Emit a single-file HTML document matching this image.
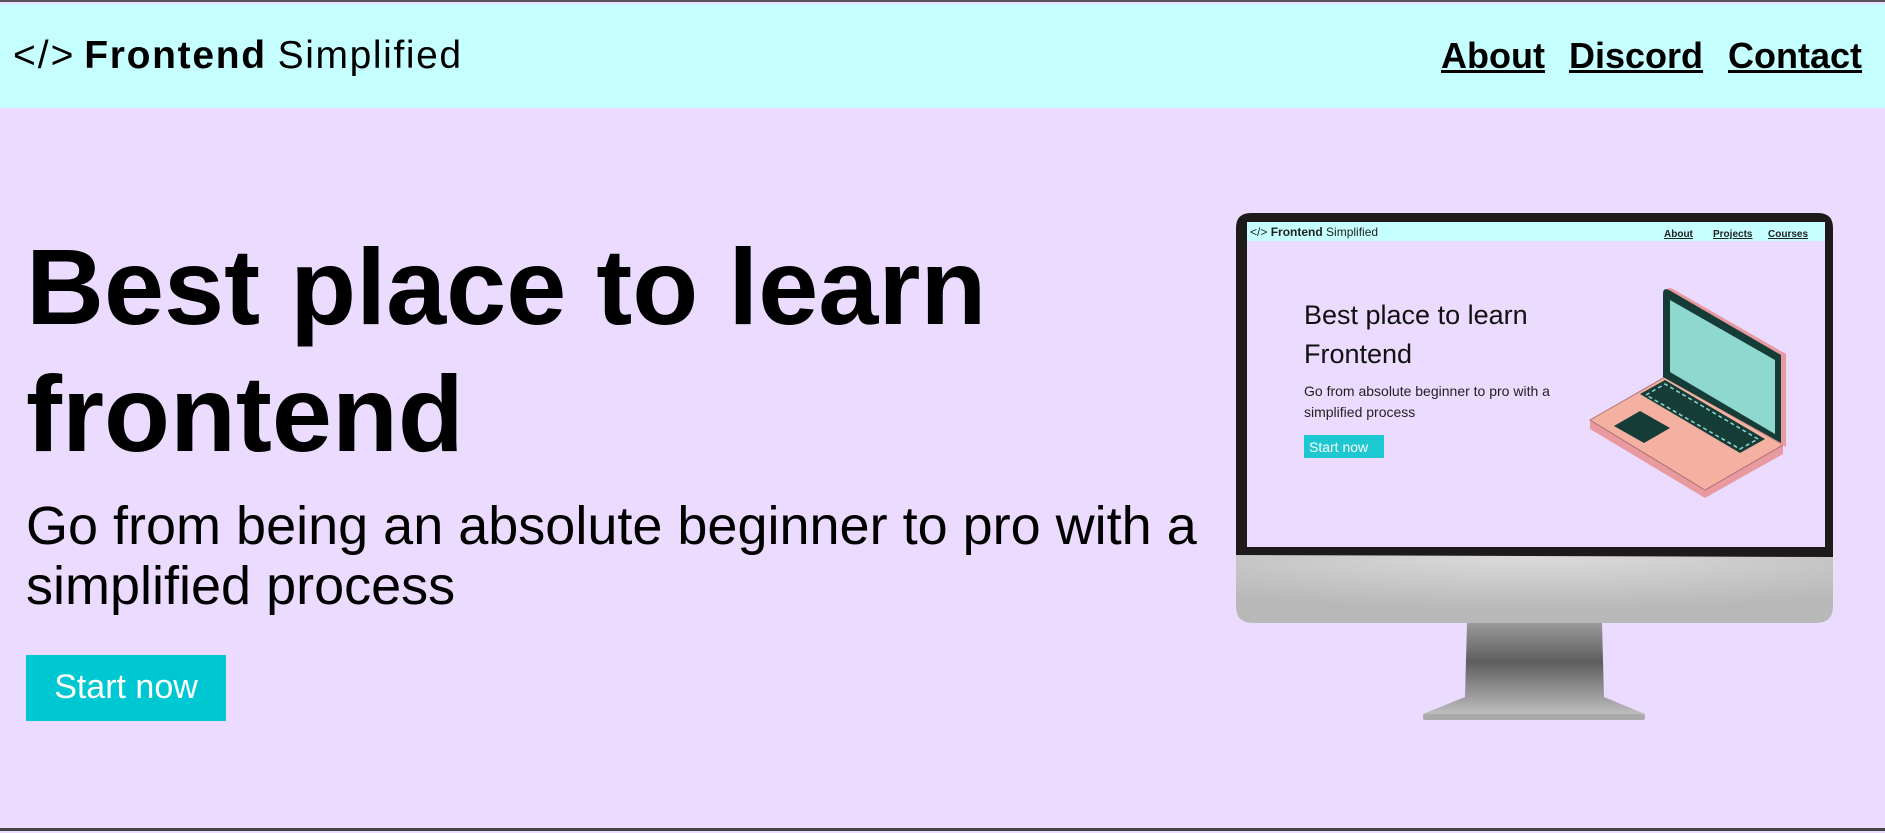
<!DOCTYPE html>
<html><head><meta charset="utf-8"><style>
*{margin:0;padding:0;box-sizing:border-box}
body{width:1885px;height:831px;background:#ebdbff;font-family:"Liberation Sans",sans-serif;position:relative;overflow:hidden;border-top:2px solid #555;border-bottom:3px solid #444}
.hdr{position:absolute;left:0;top:2px;width:1885px;height:104px;background:#c6ffff}
.logo{position:absolute;left:13px;top:32px;font-size:39px;line-height:44px;color:#000;white-space:nowrap}
.logo b{font-weight:bold;letter-spacing:1.7px}
.logo span.s{font-weight:normal;letter-spacing:1.6px}
.logo i{font-style:normal;letter-spacing:2px;margin-right:-2px}
.nav{position:absolute;top:33px;font-size:36px;font-weight:bold;text-decoration:underline;color:#000}
h1{position:absolute;left:26px;top:221px;font-size:108px;line-height:127px;font-weight:bold;color:#000}
p.sub{position:absolute;left:26px;top:494px;font-size:54px;line-height:60px;color:#000;width:1210px}
.btn{position:absolute;left:26px;top:653px;width:200px;height:66px;background:#00c8d2;color:#fff;font-size:34px;line-height:64px;text-align:center}
</style></head><body>
<div class="hdr"></div>
<div class="logo"><i>&lt;/&gt;</i> <b>Frontend</b> <span class="s">Simplified</span></div>
<div class="nav" style="left:1441px">About</div>
<div class="nav" style="left:1569px">Discord</div>
<div class="nav" style="left:1728px">Contact</div>
<h1>Best place to learn<br>frontend</h1>
<p class="sub">Go from being an absolute beginner to pro with a simplified process</p>
<div class="btn">Start now</div>

<svg style="position:absolute;left:0;top:0" width="1885" height="831" viewBox="0 0 1885 831">
<defs>
<radialGradient id="chin" cx="0.5" cy="0" r="0.8"><stop offset="0" stop-color="#dcdcdc"/><stop offset="1" stop-color="#b8b8b8"/></radialGradient>
<linearGradient id="neck" x1="0" y1="0" x2="0" y2="1"><stop offset="0" stop-color="#9a9a9a"/><stop offset="0.4" stop-color="#5e5e5e"/><stop offset="1" stop-color="#c8c8c8"/></linearGradient>
</defs>
<path d="M1467 621 L1602 621 L1604 695 L1645 712 L1645 718 L1423 718 L1423 712 L1465 695 Z" fill="url(#neck)"/>
<rect x="1423" y="712" width="222" height="6" rx="3" fill="#aaa"/>
<path d="M1236 553 L1833 553 L1833 604 Q1833 621 1816 621 L1253 621 Q1236 621 1236 604 Z" fill="url(#chin)"/>
<path d="M1236 553 L1236 226 Q1236 211 1251 211 L1818 211 Q1833 211 1833 226 L1833 555 Z" fill="#1e1a1a"/>
<rect x="1247" y="220" width="578" height="325" fill="#ebdbff"/>
<rect x="1247" y="220" width="578" height="19" fill="#c6ffff"/>
<text x="1250" y="234" font-family="Liberation Sans" font-size="12" fill="#222">&lt;/&gt; <tspan font-weight="bold">Frontend</tspan> Simplified</text>
<text x="1664" y="235" font-family="Liberation Sans" font-size="10" font-weight="bold" text-decoration="underline" fill="#222">About</text>
<text x="1713" y="235" font-family="Liberation Sans" font-size="10" font-weight="bold" text-decoration="underline" fill="#222">Projects</text>
<text x="1768" y="235" font-family="Liberation Sans" font-size="10" font-weight="bold" text-decoration="underline" fill="#222">Courses</text>
<text x="1304" y="322" font-family="Liberation Sans" font-size="27" fill="#111">Best place to learn</text>
<text x="1304" y="361" font-family="Liberation Sans" font-size="27" fill="#111">Frontend</text>
<text x="1304" y="394" font-family="Liberation Sans" font-size="14" fill="#222">Go from absolute beginner to pro with a</text>
<text x="1304" y="415" font-family="Liberation Sans" font-size="14" fill="#222">simplified process</text>
<rect x="1304" y="433" width="80" height="23" fill="#1ec8d0"/>
<text x="1309" y="450" font-family="Liberation Sans" font-size="14" fill="#fff">Start now</text>
<path d="M1590 418 L1665 375 L1783 443 L1783 452 L1705 496 L1590 427 Z" fill="#e99aa0"/>
<path d="M1590 418 L1665 375 L1783 443 L1705 488 Z" fill="#f4b0a0" stroke="#b07070" stroke-width="1"/>
<path d="M1640 392 L1665 378 L1765 437 L1740 451 Z" fill="#163c38"/>
<path d="M1646 393 L1665 382 L1758 437 L1740 447 Z" fill="none" stroke="#8fd8d0" stroke-width="1.5" stroke-dasharray="4 3"/>
<path d="M1614 424 L1640 409 L1670 426 L1644 441 Z" fill="#163c38"/>
<path d="M1665 375 L1666 290 Q1667 284 1673 287 L1786 352 L1786 445 Z" fill="#e99aa0"/>
<path d="M1663 375 L1663 292 Q1663 285 1669 288 L1781 353 L1781 441 Z" fill="#163c38"/>
<path d="M1670 370 L1670 298 L1775 358 L1775 432 Z" fill="#8fd8d0"/>
</svg>
</body></html>
